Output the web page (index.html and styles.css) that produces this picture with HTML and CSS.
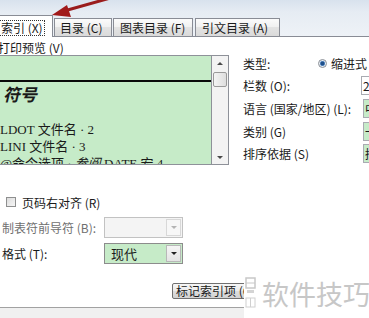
FILE: index.html
```html
<!DOCTYPE html>
<html lang="zh-CN">
<head>
<meta charset="utf-8">
<title>索引</title>
<link rel="stylesheet" href="styles.css">
</head>
<body>
<div class="dialog">
  <div class="tabstrip">
    <div class="tab active"><span class="focus">索引 (X)</span></div>
    <div class="tab t2">目录 (C)</div>
    <div class="tab t3">图表目录 (F)</div>
    <div class="tab t4">引文目录 (A)</div>
  </div>
  <div class="panel">
    <div class="preview-row">
      <div class="left">
        <div class="label">打印预览 (V)</div>
        <div class="box">
          <div class="green">
            <div class="rule"></div>
            <div class="sym">符号</div>
            <div class="entry first">LDOT 文件名 · 2</div>
            <div class="entry">LINI 文件名 · 3</div>
            <div class="entry">@命令选项 · <i>参阅</i> DATE 宏 4</div>
          </div>
          <div class="scroll">
            <div class="arrow up"></div>
            <div class="thumb"></div>
            <div class="track"></div>
            <div class="arrow down"></div>
          </div>
        </div>
      </div>
      <div class="right">
        <div class="rrow r1"><span class="rlabel short">类型:</span><span class="radio"></span><span>缩进式</span></div>
        <div class="rrow r2"><span class="rlabel">栏数 (O):</span><span class="inp white">2</span></div>
        <div class="rrow r3"><span class="rlabel">语言 (国家/地区) (L):</span><span class="inp">中</span></div>
        <div class="rrow r4"><span class="rlabel">类别 (G)</span><span class="inp">一</span></div>
        <div class="rrow r5"><span class="rlabel">排序依据 (S)</span><span class="inp">拼</span></div>
      </div>
    </div>
    <div class="check-row"><span class="check"></span><span>页码右对齐 (R)</span></div>
    <div class="field-row f1"><span class="flabel grey">制表符前导符 (B):</span><span class="combo disabled"><span class="ctext"></span><span class="dd"></span></span></div>
    <div class="field-row f2"><span class="flabel">格式 (T):</span><span class="combo green-c"><span class="ctext">现代</span><span class="dd"></span></span></div>
    <div class="btn-row"><span class="btn">标记索引项 (Q)...</span></div>
    <div class="footer"></div>
  </div>
</div>
<svg class="redarrow" width="130" height="24" viewBox="0 0 130 24">
  <line x1="114" y1="-3" x2="64" y2="11" stroke="#9a1c1c" stroke-width="3" stroke-linecap="round"/>
  <polygon points="52,15 67,5 71,17" fill="#a11a1a"/>
</svg>
<div class="watermark">
  <svg class="wlogo" width="12" height="40" viewBox="0 0 12 40">
    <rect x="1" y="4" width="9" height="10" fill="none" stroke="#c8c8c8" stroke-width="1.5"/>
    <line x1="1" y1="9" x2="10" y2="9" stroke="#c8c8c8" stroke-width="1"/>
    <rect x="2" y="16" width="7" height="3" fill="#d4d4d4"/>
    <rect x="1" y="24" width="9" height="9" fill="none" stroke="#d0d0d0" stroke-width="1"/>
    <line x1="5.5" y1="24" x2="5.5" y2="33" stroke="#d0d0d0" stroke-width="1"/>
  </svg>
  <span class="wtext">软件技巧</span>
</div>
</body>
</html>
```
FILE: styles.css
```css
html, body {
  margin: 0;
  padding: 0;
}
body {
  width: 369px;
  height: 318px;
  overflow: hidden;
  position: relative;
  background: #ffffff;
  font-family: "Noto Sans CJK SC", "Liberation Sans", sans-serif;
  font-size: 12px;
  color: #1a1a1a;
}
.dialog {
  margin-left: -4px;
  width: 400px;
  background: linear-gradient(#d8e2ed 0px, #e6ecf3 12px, #eef2f7 36px);
  padding-top: 17px;
}
.tabstrip {
  display: flex;
  align-items: flex-end;
  height: 19px;
  border-bottom: 1px solid #898c95;
  position: relative;
}
.tab {
  box-sizing: border-box;
  height: 18px;
  border: 1px solid #898c95;
  border-bottom: none;
  background: linear-gradient(#fbfbfb, #f0f0f0 50%, #e3e3e3 50%, #dadada);
  line-height: 17px;
  padding-left: 5px;
  margin-right: 1px;
  white-space: nowrap;
}
.tab.active {
  width: 57px;
  height: 22px;
  margin-bottom: -1px;
  background: #ffffff;
  padding-left: 3px;
  padding-top: 3px;
  position: relative;
  z-index: 1;
}
.focus {
  display: inline-block;
  outline: 1px dotted #333;
  line-height: 14px;
  padding: 0 1px;
}
.t2 { width: 58px; }
.t3 { width: 80px; padding-left: 6px; }
.t4 { width: 85px; margin-left: 1px; padding-left: 6px; }
.panel {
  background: #ffffff;
  padding-top: 4px;
  display: flex;
  flex-direction: column;
}
.preview-row {
  display: flex;
  height: 124px;
}
.left {
  width: 237px;
  display: flex;
  flex-direction: column;
}
.label {
  height: 14px;
  line-height: 14px;
  padding-left: 2px;
}
.box {
  height: 110px;
  box-sizing: border-box;
  display: flex;
  border: 1px solid #8e9199;
}
.green {
  flex: 1;
  background: #c6ebc8;
  border-right: 1px solid #8e9199;
  overflow: hidden;
  padding-top: 24px;
  font-family: "Liberation Serif", "Noto Sans CJK SC", serif;
  font-size: 13px;
}
.rule {
  height: 2px;
  width: 214px;
  background: #0a0a0a;
}
.sym {
  height: 20px;
  line-height: 20px;
  margin-top: 2px;
  padding-left: 6px;
  font-size: 17px;
  font-weight: bold;
  font-style: italic;
  font-family: "Noto Sans CJK SC", serif;
}
.entry {
  height: 17px;
  line-height: 17px;
  padding-left: 3px;
  white-space: nowrap;
}
.entry.first { margin-top: 17px; }
.scroll {
  width: 16px;
  background: #f3f3f3;
  display: flex;
  flex-direction: column;
  align-items: center;
}
.arrow {
  width: 0;
  height: 0;
  border-left: 3px solid transparent;
  border-right: 3px solid transparent;
}
.arrow.up {
  margin-top: 6px;
  border-bottom: 3px solid #4a4a4a;
}
.arrow.down {
  margin-bottom: 5px;
  border-top: 3px solid #4a4a4a;
}
.thumb {
  margin-top: 7px;
  width: 14px;
  height: 15px;
  box-sizing: border-box;
  border: 1px solid #9a9a9a;
  border-radius: 2px;
  background: linear-gradient(90deg, #f4f4f4, #dedede);
}
.track { flex: 1; }
.right {
  margin-left: 14px;
  padding-top: 11px;
  display: flex;
  flex-direction: column;
}
.rrow {
  display: flex;
  align-items: center;
  white-space: nowrap;
  height: 25px;
}
.rrow.r1, .rrow.r4, .rrow.r5 { height: 24px; }
.rlabel {
  width: 118px;
  flex: none;
}
.rlabel.short { width: 75px; }
.radio {
  width: 9px;
  height: 9px;
  box-sizing: border-box;
  border-radius: 50%;
  border: 1px solid #8a8f96;
  background: radial-gradient(circle, #1f4f8a 0 1.6px, #6f9fd4 2.4px, #e8eef5 3px);
  margin-right: 4px;
  flex: none;
}
.inp {
  flex: none;
  width: 40px;
  height: 19px;
  box-sizing: border-box;
  border: 1px solid #a9abb2;
  background: #c6ebc8;
  line-height: 17px;
  padding-left: 1px;
  margin-left: 2px;
}
.inp.white { background: #ffffff; margin-left: 0; }
.check-row {
  margin-top: 30px;
  height: 14px;
  display: flex;
  align-items: center;
  padding-left: 10px;
}
.check {
  width: 10px;
  height: 10px;
  box-sizing: border-box;
  border: 1px solid #8e8f8f;
  background: linear-gradient(135deg, #dcdcdc, #f6f6f6);
  margin-right: 6px;
}
.field-row {
  display: flex;
  align-items: center;
  height: 21px;
  padding-left: 6px;
}
.field-row.f1 { margin-top: 8px; }
.field-row.f2 { margin-top: 5px; }
.flabel {
  width: 102px;
  flex: none;
}
.grey { color: #6f6f6f; }
.combo {
  width: 79px;
  height: 21px;
  box-sizing: border-box;
  border: 1px solid #a9a9a9;
  display: flex;
  align-items: center;
}
.combo.disabled {
  background: #f4f4f4;
  border-color: #c2c2c2;
}
.combo.green-c {
  background: #c6ebc8;
  border-color: #8c8c8c;
}
.ctext {
  flex: 1;
  padding-left: 6px;
  line-height: 19px;
  font-size: 13px;
}
.dd {
  width: 15px;
  height: 17px;
  box-sizing: border-box;
  margin-right: 1px;
  border: 1px solid #b8b8b8;
  background: linear-gradient(#f5f5f5, #e4e4e4);
  position: relative;
}
.dd::after {
  content: "";
  position: absolute;
  left: 4px;
  top: 6px;
  border-left: 3px solid transparent;
  border-right: 3px solid transparent;
  border-top: 3px solid #222;
}
.disabled .dd {
  border-color: #d8d8d8;
  background: #f7f7f7;
}
.disabled .dd::after { border-top-color: #b4b4b4; }
.btn-row {
  margin-top: 18px;
  height: 16px;
  padding-left: 176px;
}
.btn {
  display: inline-block;
  height: 16px;
  box-sizing: border-box;
  border: 1px solid #707070;
  border-radius: 2px;
  background: linear-gradient(#f6f6f6, #ebebeb 50%, #dddddd 50%, #d2d2d2);
  line-height: 14px;
  padding: 0 3px;
  white-space: nowrap;
}
.footer {
  margin-top: 9px;
  height: 11px;
  border-top: 1px solid #a2a2a2;
  background: #f0f0f0;
}
.redarrow {
  position: absolute;
  left: 0;
  top: 0;
}
.watermark {
  position: absolute;
  left: 244px;
  top: 270px;
  width: 125px;
  height: 48px;
  background: #ffffff;
  display: flex;
  align-items: center;
}
.wlogo {
  flex: none;
  margin-left: 1px;
}
.wtext {
  margin-left: 5px;
  font-size: 27px;
  line-height: 30px;
  color: #c7c7c7;
  white-space: nowrap;
}
```
